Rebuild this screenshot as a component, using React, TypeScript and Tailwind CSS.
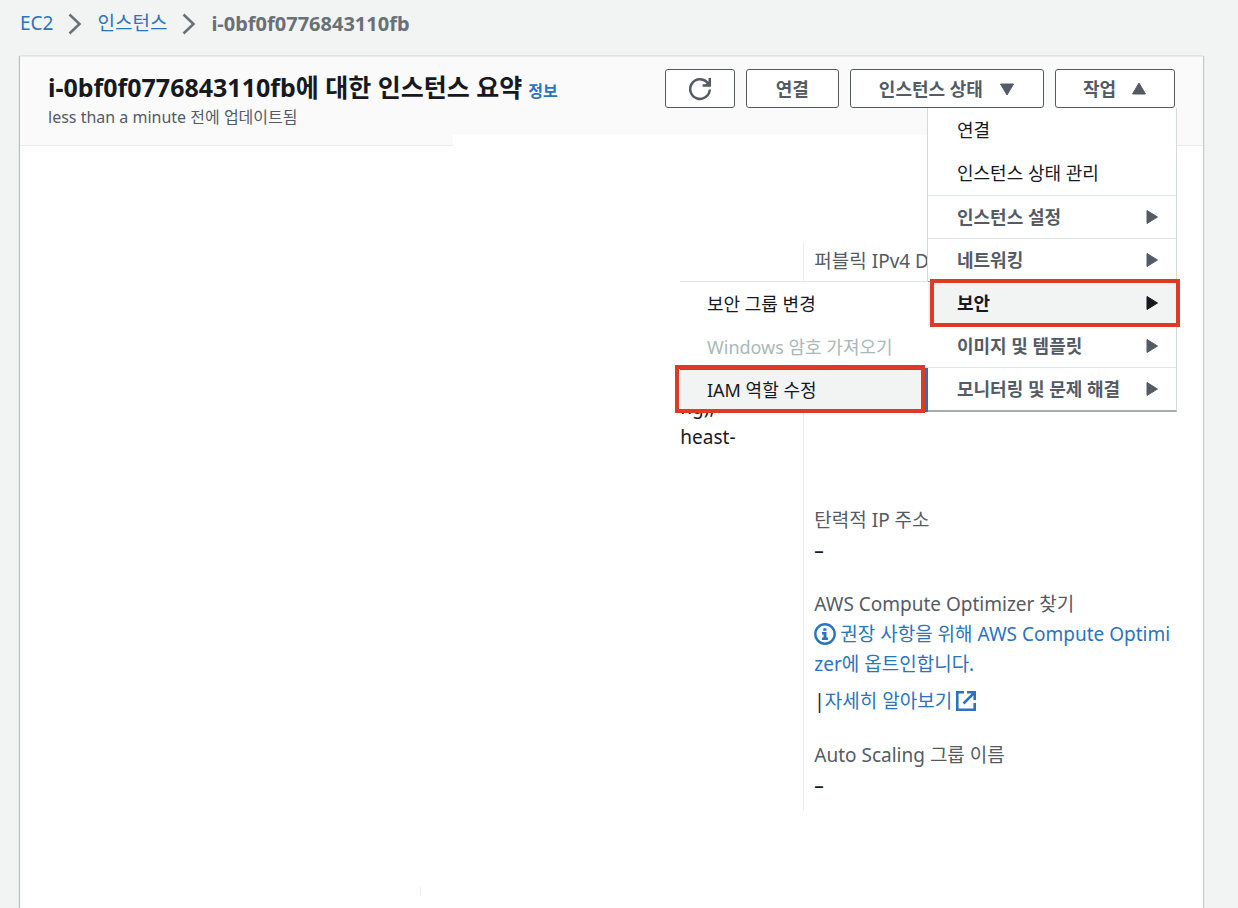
import React from "react";

const Triangle = ({ dir }: { dir: "up" | "down" | "right" }) => {
  const points = {
    up: "8,2 14.5,13 1.5,13",
    down: "1.5,3 14.5,3 8,14",
    right: "3,1.5 13.5,8 3,14.5",
  }[dir];
  return (
    <svg className="size-4 shrink-0" viewBox="0 0 16 16" aria-hidden="true">
      <polygon points={points} fill="currentColor" stroke="currentColor" strokeLinejoin="round" />
    </svg>
  );
};

const Chevron = () => (
  <svg className="h-6 w-4" viewBox="0 0 16 24" fill="none" stroke="#687078" strokeWidth="2.5" aria-hidden="true">
    <path d="M2.5 2.5 12.5 12 2.5 21.5" />
  </svg>
);

const buttonClass =
  "flex h-[39px] items-center rounded-[3px] border border-[#545b64] bg-white font-bold text-[#545b64]";

const groups = ["인스턴스 설정", "네트워킹", "보안", "이미지 및 템플릿", "모니터링 및 문제 해결"];

function ActionMenu() {
  return (
    <ul className="absolute top-full -right-[2px] z-10 w-[250px] border-x border-b-2 border-[#d5dbdb] border-b-[#a3adad] bg-white text-[#16191f]">
      <li>
        <button className="flex h-[43px] w-full items-center px-[29px]">연결</button>
      </li>
      <li className="pb-px">
        <button className="flex h-[43px] w-full items-center px-[29px]">인스턴스 상태 관리</button>
      </li>
      {groups.map((name) => {
        const open = name === "보안";
        return (
          <li key={name} className="relative">
            <button
              aria-expanded={open}
              className={
                "flex h-[43px] w-full items-center justify-between border-t pr-4 pl-[29px] font-bold " +
                (open
                  ? "border-[#879196] bg-[#f2f3f3] text-[#16191f]"
                  : "border-[#e1e6e6] text-[#545b64]")
              }
            >
              {name}
              <Triangle dir="right" />
            </button>
            {open && (
              <span className="pointer-events-none absolute -top-[2px] -right-1 -bottom-[3px] left-[2px] z-10 border-4 border-[#df3a26]" />
            )}
            {open && <SecurityMenu />}
          </li>
        );
      })}
    </ul>
  );
}

function SecurityMenu() {
  return (
    <ul className="absolute top-0 right-full w-[248px] border-t border-[#e1e6e6] bg-white">
      <li>
        <button className="flex h-[43px] w-full items-center px-[27px]">보안 그룹 변경</button>
      </li>
      <li>
        <button disabled className="flex h-[43px] w-full items-center px-[27px] text-[#aab7b8]">
          Windows 암호 가져오기
        </button>
      </li>
      <li className="relative">
        <button className="flex h-[44px] w-full items-center border-y-2 border-r-4 border-[#2074c4] bg-[#f2f3f3] px-[27px]">
          IAM 역할 수정
        </button>
        <span className="pointer-events-none absolute -top-[3px] right-[3px] -bottom-px -left-[5px] border-4 border-[#df3a26]" />
      </li>
    </ul>
  );
}

export default function App() {
  return (
    <div className="flex min-h-screen flex-col bg-[#f2f3f3] pr-[35px] pl-5 font-['Noto_Sans','Noto_Sans_CJK_KR',sans-serif] text-lg text-[#16191f]">
      <nav className="flex h-14 items-center gap-[14px] pb-2 text-[19px]">
        <a href="#ec2" className="text-[#2a74bd]">EC2</a>
        <Chevron />
        <a href="#instances" className="text-[#2a74bd]">인스턴스</a>
        <Chevron />
        <span className="text-xl font-bold text-[#687078]">i-0bf0f0776843110fb</span>
      </nav>

      <main className="flex grow flex-col border-t border-[#eaeded] bg-white shadow-[-1px_0_1px_#b8bfbf,1px_0_1px_#c3c9c9]">
        <header className="relative flex h-[89px] justify-between border-b border-[#eaeded] bg-[#fafafa] px-7 pt-3">
          <div className="absolute right-7 -bottom-px left-[433px] h-[11px] bg-white" />
          <div className="pt-[2px]">
            <div className="flex items-baseline gap-1.5">
              <h1 className="text-[25px] leading-8 font-bold">i-0bf0f0776843110fb에 대한 인스턴스 요약</h1>
              <a href="#info" className="text-base font-bold text-[#2a74bd]">정보</a>
            </div>
            <p className="text-base leading-7 text-[#545b64]">less than a minute 전에 업데이트됨</p>
          </div>
          <div className="flex items-start gap-[11px]">
            <button aria-label="새로 고침" className={buttonClass + " w-[70px] justify-center"}>
              <svg className="size-6" viewBox="0 0 24 24" fill="none" stroke="currentColor" strokeWidth="2.5" aria-hidden="true">
                <path d="M21.8 12.5A9.8 9.8 0 1 1 19 5.2L21.5 7.8" />
                <path d="M21.8 1v7.6H14.6" />
                <path d="M22 3v6h-6z" fill="currentColor" stroke="none" />
              </svg>
            </button>
            <button className={buttonClass + " px-[29px]"}>연결</button>
            <button className={buttonClass + " gap-4 px-7"}>
              인스턴스 상태
              <Triangle dir="down" />
            </button>
            <div className="relative">
              <button aria-expanded="true" className={buttonClass + " gap-[15px] px-[27px]"}>
                작업
                <Triangle dir="up" />
              </button>
              <ActionMenu />
            </div>
          </div>
        </header>

        <div className="grid grid-cols-3 px-4 pt-24 text-[19px]">
          <div />
          <div className="flex justify-end pt-[150px]">
            <p className="w-[123px] leading-[30px]">
              ng),
              <br />
              heast-
            </p>
          </div>
          <dl className="border-l border-[#eaeded] px-[10px] leading-[30px]">
            <div className="mb-[23px] h-[240px] pt-1 text-[#545b64]">
              <dt>퍼블릭 IPv4 DNS</dt>
            </div>
            <div className="mb-6">
              <dt className="text-[#545b64]">탄력적 IP 주소</dt>
              <dd className="font-medium">–</dd>
            </div>
            <div className="mb-6">
              <dt className="text-[#545b64]">AWS Compute Optimizer 찾기</dt>
              <dd>
                <a href="#optin" className="break-all text-[#2a74bd]">
                  <svg className="mr-1 inline size-[22px] align-[-4px]" viewBox="0 0 22 22" fill="none" stroke="currentColor" aria-hidden="true">
                    <circle cx="11" cy="11" r="9.7" strokeWidth="2.4" />
                    <path d="M9.3 5.2h3.2v2.6H9.3zM8 9h4.5v5.4H14V17H8v-2.6h1.5v-2.8H8z" fill="currentColor" stroke="none" />
                  </svg>
                  권장 사항을 위해 AWS Compute Optimizer에 옵트인합니다.
                </a>
                <div className="mt-[7px] flex items-center">
                  |
                  <a href="#learn" className="flex items-center gap-1 text-[#2a74bd]">
                    자세히 알아보기
                    <svg className="size-5" viewBox="0 0 20 20" fill="none" stroke="currentColor" strokeWidth="2.6" aria-hidden="true">
                      <path d="M8 1.3H1.3v17.4h17.4V12M11 1.3h7.7V9M18.2 1.8 7.5 12.5" />
                    </svg>
                  </a>
                </div>
              </dd>
            </div>
            <div className="pb-[11px]">
              <dt className="text-[#545b64]">Auto Scaling 그룹 이름</dt>
              <dd className="font-medium">–</dd>
            </div>
          </dl>
          <div />
          <div className="mt-[76px] h-2 border-l border-[#eaeded]" />
        </div>
      </main>
    </div>
  );
}
